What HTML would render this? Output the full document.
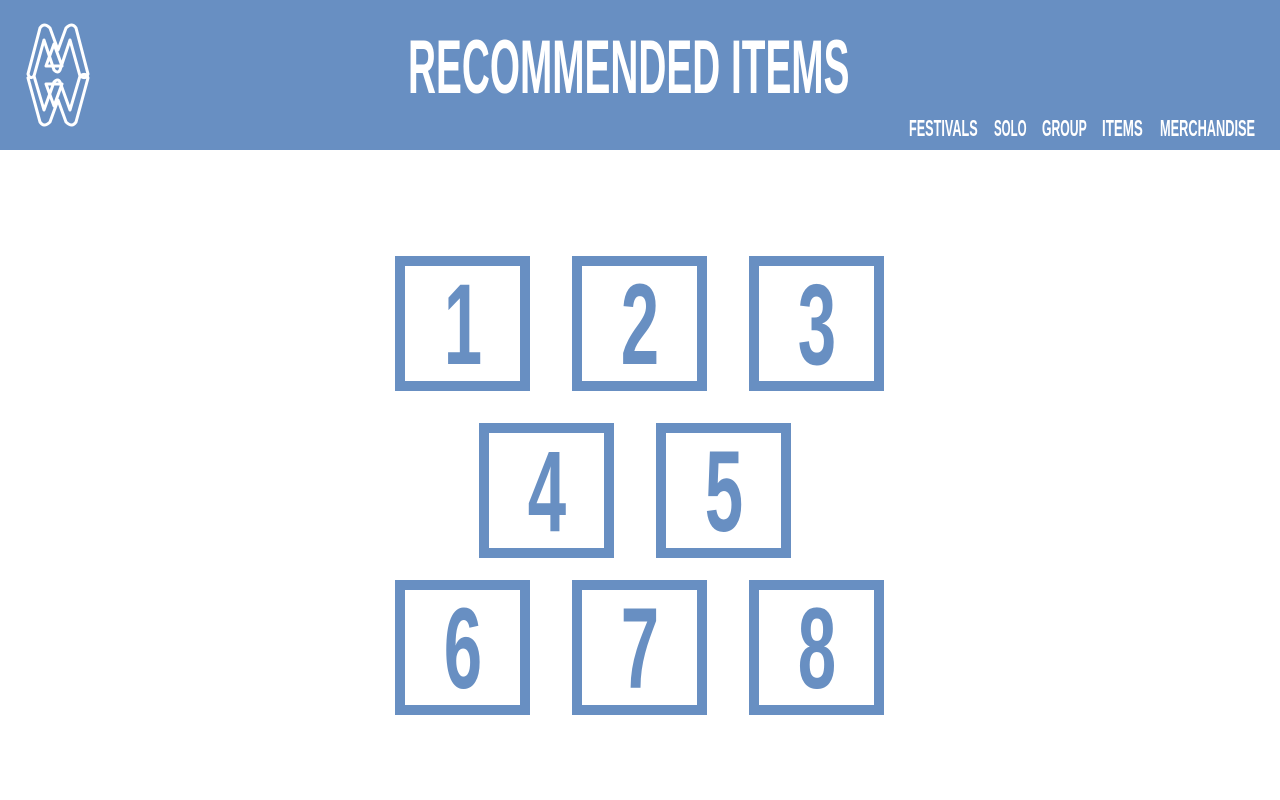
<!DOCTYPE html>
<html><head><style>
body{margin:0;width:1280px;height:800px;background:#fff;position:relative;overflow:hidden;font-family:"Liberation Sans",sans-serif;}
.hdr{position:absolute;left:0;top:0;width:1280px;height:150px;background:#688fc2;}
.t{position:absolute;white-space:nowrap;font-weight:bold;color:#fff;transform-origin:0 0;}
.box{position:absolute;width:115px;height:115px;border:10px solid #688fc2;}
.box span{position:absolute;left:50%;top:2px;font-weight:bold;font-size:115px;line-height:115px;color:#688fc2;transform:translateX(-50%) scaleX(0.6);}
</style></head><body>
<div class="hdr">
<svg style="position:absolute;left:24px;top:22px" width="68" height="106" viewBox="0 0 68 106" fill="none" stroke="#fff" stroke-width="3" stroke-linejoin="round" stroke-linecap="round">
<path d="M4 52 L16 6 Q20 0 26 6 L34 28 L42 6 Q48 0 52 6 L64 52 Q62 58 56 54 L46 18 L36 48 Q34 52 30 48 L20 18 L10 54 Q6 58 4 52Z"/>
<path d="M22 44 L30 22 L38 44 Z"/>
<path d="M4 56 L16 100 Q20 106 26 100 L34 78 L42 100 Q48 106 52 100 L64 56 Q62 50 56 54 L46 88 L36 60 Q34 56 30 60 L20 88 L10 54"/>
<path d="M22 62 L30 84 L38 62 Z"/>
</svg>
<div class="t" style="left:408px;top:28px;font-size:76px;line-height:80px;transform:scaleX(0.51)">RECOMMENDED ITEMS</div>
<div class="t" style="left:909px;top:115px;font-size:23px;line-height:26px;transform:scaleX(0.55)">FESTIVALS</div>
<div class="t" style="left:994px;top:115px;font-size:23px;line-height:26px;transform:scaleX(0.5)">SOLO</div>
<div class="t" style="left:1042px;top:115px;font-size:23px;line-height:26px;transform:scaleX(0.53)">GROUP</div>
<div class="t" style="left:1102px;top:115px;font-size:23px;line-height:26px;transform:scaleX(0.58)">ITEMS</div>
<div class="t" style="left:1160px;top:115px;font-size:23px;line-height:26px;transform:scaleX(0.555)">MERCHANDISE</div>
</div>
<div class="box" style="left:395px;top:256px"><span>1</span></div>
<div class="box" style="left:572px;top:256px"><span>2</span></div>
<div class="box" style="left:749px;top:256px"><span>3</span></div>
<div class="box" style="left:479px;top:423px"><span>4</span></div>
<div class="box" style="left:656px;top:423px"><span>5</span></div>
<div class="box" style="left:395px;top:580px"><span>6</span></div>
<div class="box" style="left:572px;top:580px"><span>7</span></div>
<div class="box" style="left:749px;top:580px"><span>8</span></div>
</body></html>
